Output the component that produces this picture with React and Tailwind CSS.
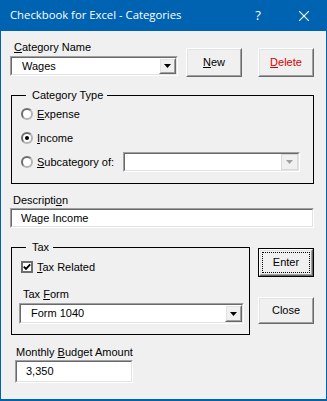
import React from 'react';

const sunkenOuter = 'border border-t-[#a0a0a0] border-l-[#a0a0a0] border-b-white border-r-white';
const sunkenInner = 'border border-t-[#696969] border-l-[#696969] border-b-[#e3e3e3] border-r-[#e3e3e3]';
const raisedOuter = 'border border-t-white border-l-white border-b-[#696969] border-r-[#696969] bg-[#f0f0f0]';
const raisedInner = 'border border-t-[#e3e3e3] border-l-[#e3e3e3] border-b-[#a0a0a0] border-r-[#a0a0a0]';

function Arrow({ color = '#000' }) {
  return (
    <svg width="7" height="4" viewBox="0 0 7 4">
      <polygon points="0,0 7,0 3.5,4" fill={color} />
    </svg>
  );
}

function DropBtn({ disabled }) {
  return (
    <div className={`h-full w-[17px] ${disabled ? 'border border-[#d9d9d9] bg-[#f0f0f0]' : raisedOuter}`}>
      <div className={`h-full flex items-center justify-center ${disabled ? '' : raisedInner}`}>
        <Arrow color={disabled ? '#a0a0a0' : '#000'} />
      </div>
    </div>
  );
}

function Combo({ value, className = '', pad = 'pl-[10px]', disabled }) {
  return (
    <div className={`${sunkenOuter} bg-white ${className}`}>
      <div className={`${sunkenInner} h-full flex items-center`}>
        <span className={`flex-1 ${pad} leading-[13px]`}>{value}</span>
        <DropBtn disabled={disabled} />
      </div>
    </div>
  );
}

function TextBox({ value, className = '', pad = 'pl-[9px]' }) {
  return (
    <div className={`${sunkenOuter} bg-white ${className}`}>
      <div className={`${sunkenInner} h-full flex items-center ${pad}`}>
        <span className="leading-[13px]">{value}</span>
      </div>
    </div>
  );
}

function Button({ children, className = '' }) {
  return (
    <div className={`${raisedOuter} ${className}`}>
      <div className={`${raisedInner} h-full flex items-center justify-center`}>{children}</div>
    </div>
  );
}

function Radio({ checked }) {
  return (
    <div className="w-[12px] h-[12px] rounded-full bg-white border-2 border-t-[#6d6d6d] border-l-[#6d6d6d] border-b-[#b4b4b4] border-r-[#b4b4b4] flex items-center justify-center">
      {checked && <div className="w-[4px] h-[4px] rounded-full bg-black" />}
    </div>
  );
}

function Check() {
  return (
    <div className="w-[12px] h-[12px] bg-white border-2 border-[#6d6d6d] flex items-center justify-center">
      <svg width="8" height="8" viewBox="0 0 8 8">
        <path d="M0.8 3.6 L3 5.8 L7.2 1.4" fill="none" stroke="#000" strokeWidth="1.9" />
      </svg>
    </div>
  );
}

function Legend({ children }) {
  return <legend className="ml-[5px] pl-[6px] pr-[4px] leading-[13px]">{children}</legend>;
}

export default function App() {
  return (
    <div className="w-[327px] h-[401px] bg-[#0063b1] flex flex-col font-['Liberation_Sans',Arial,sans-serif] text-[11px] text-black">
      <div className="h-[31px] flex items-center text-white shrink-0">
        <span className="flex-1 pl-[10px] font-['Open_Sans',sans-serif] text-[11.3px]">Checkbook for Excel - Categories</span>
        <span className="w-[46px] text-center font-['Open_Sans',sans-serif] text-[13px]">?</span>
        <span className="w-[46px] flex justify-center">
          <svg width="10" height="10" viewBox="0 0 10 10">
            <path d="M0 0 L10 10 M10 0 L0 10" stroke="#fff" strokeWidth="1.1" />
          </svg>
        </span>
      </div>

      <div className="flex-1 mx-[1px] mb-[2px] bg-[#f0f0f0] flex flex-col pl-[9px] pt-[10px]">
        <div className="flex items-start">
          <div className="flex flex-col">
            <span className="ml-[4px] leading-[13px]"><u>C</u>ategory Name</span>
            <Combo value="Wages" className="mt-[2px] w-[168px] h-[20px]" />
          </div>
          <Button className="ml-[8px] mt-[7px] w-[56px] h-[29px]"><span><u>N</u>ew</span></Button>
          <Button className="ml-[16px] mt-[7px] w-[56px] h-[29px]"><span className="text-[#d40000]"><u>D</u>elete</span></Button>
        </div>

        <fieldset className="mt-[12px] ml-[1px] w-[303px] border border-black pl-[9px] pt-[2px] pb-[11px]">
          <Legend>Category Type</Legend>
          <div className="flex flex-col gap-[4px]">
            <div className="h-[20px] flex items-center">
              <Radio />
              <span className="ml-[4px]"><u>E</u>xpense</span>
            </div>
            <div className="h-[20px] flex items-center">
              <Radio checked />
              <span className="ml-[4px]"><u>I</u>ncome</span>
            </div>
            <div className="h-[20px] flex items-center">
              <div className="w-[102px] flex items-center">
                <Radio />
                <span className="ml-[4px]"><u>S</u>ubcategory of:</span>
              </div>
              <Combo value="" disabled className="w-[177px] h-[20px] -mt-[1px]" />
            </div>
          </div>
        </fieldset>

        <span className="mt-[10px] ml-[3px] leading-[13px]">Descripti<u>o</u>n</span>
        <TextBox value="Wage Income" className="mt-[1px] w-[304px] h-[20px]" />

        <div className="flex items-start mt-[13px]">
          <fieldset className="ml-[1px] w-[239px] border border-black pl-[9px] pt-[6px] pb-[10px]">
            <Legend>Tax</Legend>
            <div className="h-[14px] flex items-center">
              <Check />
              <span className="ml-[4px]"><u>T</u>ax Related</span>
            </div>
            <div className="mt-[14px] ml-[2px] leading-[13px]">Tax <u>F</u>orm</div>
            <Combo value="Form 1040" className="mt-[2px] -ml-[2px] w-[225px] h-[21px]" />
          </fieldset>
          <div className="ml-[8px] flex flex-col">
            <div className="mt-[7px] w-[56px] h-[29px] border border-black">
              <div className={`${raisedOuter} h-full`}>
                <div className={`${raisedInner} h-full p-[1px]`}>
                  <div className="h-full border border-dotted border-black flex items-center justify-center">Enter</div>
                </div>
              </div>
            </div>
            <Button className="mt-[20px] w-[56px] h-[27px]">Close</Button>
          </div>
        </div>

        <span className="mt-[11px] ml-[6px] leading-[13px]">Monthly <u>B</u>udget Amount</span>
        <TextBox value="3,350" pad="pl-[9px]" className="mt-[1px] ml-[5px] w-[118px] h-[23px]" />
      </div>
    </div>
  );
}
